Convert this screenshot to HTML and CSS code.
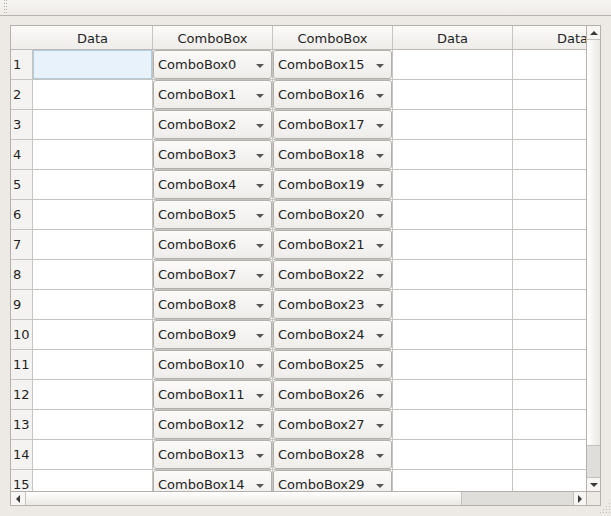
FILE: index.html
```html
<!DOCTYPE html>
<html>
<head>
<meta charset="utf-8">
<link rel="stylesheet" href="styles.css">
</head>
<body>
<div class="toolbar"><span class="grip"></span><span class="grip"></span></div>
<div class="frame">
  <div class="main">
    <div class="viewport">
      <div class="table">
        <div class="row head">
          <div class="cell rh corner"></div>
          <div class="cell hd">Data</div>
          <div class="cell hd">ComboBox</div>
          <div class="cell hd">ComboBox</div>
          <div class="cell hd">Data</div>
          <div class="cell hd">Data</div>
        </div>
        <div class="row"><div class="cell rh">1</div><div class="cell"><div class="sel"></div></div><div class="cell cb"><div class="combo">ComboBox0<i class="arr"></i></div></div><div class="cell cb"><div class="combo">ComboBox15<i class="arr"></i></div></div><div class="cell"></div><div class="cell"></div></div>
        <div class="row"><div class="cell rh">2</div><div class="cell"></div><div class="cell cb"><div class="combo">ComboBox1<i class="arr"></i></div></div><div class="cell cb"><div class="combo">ComboBox16<i class="arr"></i></div></div><div class="cell"></div><div class="cell"></div></div>
        <div class="row"><div class="cell rh">3</div><div class="cell"></div><div class="cell cb"><div class="combo">ComboBox2<i class="arr"></i></div></div><div class="cell cb"><div class="combo">ComboBox17<i class="arr"></i></div></div><div class="cell"></div><div class="cell"></div></div>
        <div class="row"><div class="cell rh">4</div><div class="cell"></div><div class="cell cb"><div class="combo">ComboBox3<i class="arr"></i></div></div><div class="cell cb"><div class="combo">ComboBox18<i class="arr"></i></div></div><div class="cell"></div><div class="cell"></div></div>
        <div class="row"><div class="cell rh">5</div><div class="cell"></div><div class="cell cb"><div class="combo">ComboBox4<i class="arr"></i></div></div><div class="cell cb"><div class="combo">ComboBox19<i class="arr"></i></div></div><div class="cell"></div><div class="cell"></div></div>
        <div class="row"><div class="cell rh">6</div><div class="cell"></div><div class="cell cb"><div class="combo">ComboBox5<i class="arr"></i></div></div><div class="cell cb"><div class="combo">ComboBox20<i class="arr"></i></div></div><div class="cell"></div><div class="cell"></div></div>
        <div class="row"><div class="cell rh">7</div><div class="cell"></div><div class="cell cb"><div class="combo">ComboBox6<i class="arr"></i></div></div><div class="cell cb"><div class="combo">ComboBox21<i class="arr"></i></div></div><div class="cell"></div><div class="cell"></div></div>
        <div class="row"><div class="cell rh">8</div><div class="cell"></div><div class="cell cb"><div class="combo">ComboBox7<i class="arr"></i></div></div><div class="cell cb"><div class="combo">ComboBox22<i class="arr"></i></div></div><div class="cell"></div><div class="cell"></div></div>
        <div class="row"><div class="cell rh">9</div><div class="cell"></div><div class="cell cb"><div class="combo">ComboBox8<i class="arr"></i></div></div><div class="cell cb"><div class="combo">ComboBox23<i class="arr"></i></div></div><div class="cell"></div><div class="cell"></div></div>
        <div class="row"><div class="cell rh">10</div><div class="cell"></div><div class="cell cb"><div class="combo">ComboBox9<i class="arr"></i></div></div><div class="cell cb"><div class="combo">ComboBox24<i class="arr"></i></div></div><div class="cell"></div><div class="cell"></div></div>
        <div class="row"><div class="cell rh">11</div><div class="cell"></div><div class="cell cb"><div class="combo">ComboBox10<i class="arr"></i></div></div><div class="cell cb"><div class="combo">ComboBox25<i class="arr"></i></div></div><div class="cell"></div><div class="cell"></div></div>
        <div class="row"><div class="cell rh">12</div><div class="cell"></div><div class="cell cb"><div class="combo">ComboBox11<i class="arr"></i></div></div><div class="cell cb"><div class="combo">ComboBox26<i class="arr"></i></div></div><div class="cell"></div><div class="cell"></div></div>
        <div class="row"><div class="cell rh">13</div><div class="cell"></div><div class="cell cb"><div class="combo">ComboBox12<i class="arr"></i></div></div><div class="cell cb"><div class="combo">ComboBox27<i class="arr"></i></div></div><div class="cell"></div><div class="cell"></div></div>
        <div class="row"><div class="cell rh">14</div><div class="cell"></div><div class="cell cb"><div class="combo">ComboBox13<i class="arr"></i></div></div><div class="cell cb"><div class="combo">ComboBox28<i class="arr"></i></div></div><div class="cell"></div><div class="cell"></div></div>
        <div class="row"><div class="cell rh">15</div><div class="cell"></div><div class="cell cb"><div class="combo">ComboBox14<i class="arr"></i></div></div><div class="cell cb"><div class="combo">ComboBox29<i class="arr"></i></div></div><div class="cell"></div><div class="cell"></div></div>
      </div>
    </div>
    <div class="vscroll">
      <div class="sbtn vbtn"><i class="tri up"></i></div>
      <div class="vhandle"></div>
      <div class="vgroove"></div>
      <div class="sbtn vbtn vbot"><i class="tri down"></i></div>
    </div>
  </div>
  <div class="hscroll">
    <div class="sbtn hbtn"><i class="tri left"></i></div>
    <div class="hhandle"></div>
    <div class="hgroove"></div>
    <div class="sbtn hbtn hright"><i class="tri right"></i></div>
    <div class="hcorner"></div>
  </div>
</div>
<svg class="sizegrip" width="11" height="14" viewBox="0 0 11 14">
  <g fill="#c2bdb8">
    <rect x="9" y="2" width="1" height="1"/>
    <rect x="9" y="5" width="1" height="1"/><rect x="6" y="5" width="1" height="1"/>
    <rect x="9" y="8" width="1" height="1"/><rect x="6" y="8" width="1" height="1"/><rect x="3" y="8" width="1" height="1"/>
    <rect x="9" y="11" width="1" height="1"/><rect x="6" y="11" width="1" height="1"/><rect x="3" y="11" width="1" height="1"/><rect x="0" y="11" width="1" height="1"/>
  </g>
</svg>
</body>
</html>
```

FILE: styles.css
```css
html, body {
  margin: 0;
  padding: 0;
}
body {
  width: 611px;
  height: 516px;
  background: #edeae6;
  font-family: "DejaVu Sans", "Liberation Sans", sans-serif;
  font-size: 13px;
  color: #1f1f1f;
  position: relative;
  overflow: hidden;
}
.toolbar {
  height: 15px;
  border-bottom: 1px solid #b8b3ae;
  background: linear-gradient(#f7f5f3, #eeebe7);
  display: flex;
  gap: 1px;
  padding-left: 4px;
}
.grip {
  width: 1px;
  height: 15px;
  background: repeating-linear-gradient(#b4afaa 0 1px, transparent 1px 3px);
}
.frame {
  box-sizing: border-box;
  width: 591px;
  height: 481px;
  margin: 9px 0 0 10px;
  border: 1px solid #b5b0ab;
  background: #fff;
}
.main {
  display: flex;
  height: 465px;
}
.viewport {
  width: 575px;
  height: 465px;
  overflow: hidden;
}
.table {
  width: 622px;
}
.row {
  display: flex;
  height: 30px;
}
.row.head {
  height: 24px;
  background: linear-gradient(#fbfaf9, #efece9);
}
.cell {
  box-sizing: border-box;
  width: 120px;
  flex: none;
  border-right: 1px solid #c7c3bf;
  border-bottom: 1px solid #c7c3bf;
  display: flex;
  align-items: center;
}
.cell.rh {
  width: 22px;
  padding-left: 2px;
  background: #f5f3f1;
}
.cell.corner {
  border-right: none;
  background: transparent;
}
.cell.hd {
  justify-content: center;
  padding-top: 1px;
}
.head .cell {
  border-bottom-color: #bdb9b5;
}
.sel {
  box-sizing: border-box;
  width: 119px;
  height: 29px;
  background: #e7f2fa;
  border: 1px solid #b2cde2;
  align-self: flex-start;
}
.cell.cb {
  align-items: stretch;
}
.combo {
  box-sizing: border-box;
  flex: 1;
  display: flex;
  align-items: center;
  padding-left: 4px;
  border: 1px solid #b3afaa;
  border-radius: 3px;
  background: linear-gradient(#fbfaf9, #efedea);
  position: relative;
}
.arr {
  position: absolute;
  right: 7px;
  top: 13px;
  width: 0;
  height: 0;
  border-left: 4px solid transparent;
  border-right: 4px solid transparent;
  border-top: 4px solid #565656;
}
.vscroll {
  box-sizing: border-box;
  width: 14px;
  border-left: 1px solid #b5b0ab;
  display: flex;
  flex-direction: column;
  background: #edeae6;
}
.sbtn {
  display: flex;
  align-items: center;
  justify-content: center;
  background: #f7f6f4;
  flex: none;
}
.vbtn {
  height: 14px;
  border-bottom: 1px solid #c4c0bb;
  box-sizing: border-box;
}
.vbot {
  border-bottom: none;
  border-top: 1px solid #c4c0bb;
}
.vhandle {
  height: 406px;
  box-sizing: border-box;
  border-bottom: 1px solid #c4c0bb;
  background: linear-gradient(90deg, #ffffff, #ebe8e4);
}
.vgroove {
  flex: 1;
  background: #e0dedb;
}
.tri {
  width: 0;
  height: 0;
  display: block;
}
.tri.up {
  border-left: 4px solid transparent;
  border-right: 4px solid transparent;
  border-bottom: 4px solid #3a3a3a;
}
.tri.down {
  border-left: 4px solid transparent;
  border-right: 4px solid transparent;
  border-top: 4px solid #3a3a3a;
}
.tri.left {
  border-top: 4px solid transparent;
  border-bottom: 4px solid transparent;
  border-right: 4px solid #3a3a3a;
}
.tri.right {
  border-top: 4px solid transparent;
  border-bottom: 4px solid transparent;
  border-left: 4px solid #3a3a3a;
}
.hscroll {
  box-sizing: border-box;
  height: 14px;
  border-top: 1px solid #b5b0ab;
  display: flex;
  background: #edeae6;
}
.hbtn {
  width: 15px;
  box-sizing: border-box;
  border-right: 1px solid #c4c0bb;
}
.hright {
  width: 14px;
  border-right: 1px solid #b5b0ab;
  border-left: 1px solid #c4c0bb;
}
.hhandle {
  width: 436px;
  box-sizing: border-box;
  border-right: 1px solid #c4c0bb;
  background: linear-gradient(#ffffff, #ebe8e4);
}
.hgroove {
  flex: 1;
  background: #e0dedb;
}
.hcorner {
  width: 13px;
  background: #edeae6;
}
.sizegrip {
  position: absolute;
  right: 0;
  bottom: 1px;
}
```
